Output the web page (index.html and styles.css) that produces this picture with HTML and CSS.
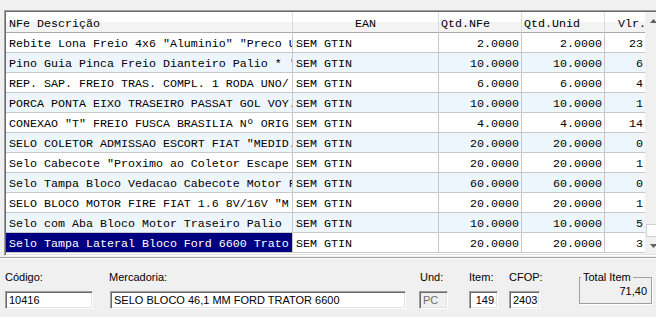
FILE: index.html
```html
<html lang="pt-BR">
<head>
    <meta charset="UTF-8">
    <meta name="viewport" content="width=device-width, initial-scale=1.0">
    <title>Itens da NFe</title>
    <link rel="stylesheet" href="styles.css">
</head>
<body>
    <div class="grid">
        <div class="cells">
            <div class="row head">
                <div class="cell c-desc">NFe Descrição</div>
                <div class="cell c-ean">EAN</div>
                <div class="cell c-qtd">Qtd.NFe</div>
                <div class="cell c-qtd">Qtd.Unid</div>
                <div class="cell c-vlr">Vlr.</div>
            </div>
            <div class="row">
                <div class="cell c-desc">Rebite Lona Freio 4x6 "Aluminio" "Preco U</div>
                <div class="cell c-ean">SEM GTIN</div>
                <div class="cell c-qtd">2.0000</div>
                <div class="cell c-qtd">2.0000</div>
                <div class="cell c-vlr">23</div>
            </div>
            <div class="row alt">
                <div class="cell c-desc">Pino Guia Pinca Freio Dianteiro Palio * '</div>
                <div class="cell c-ean">SEM GTIN</div>
                <div class="cell c-qtd">10.0000</div>
                <div class="cell c-qtd">10.0000</div>
                <div class="cell c-vlr">6</div>
            </div>
            <div class="row">
                <div class="cell c-desc">REP. SAP. FREIO TRAS. COMPL. 1 RODA UNO/</div>
                <div class="cell c-ean">SEM GTIN</div>
                <div class="cell c-qtd">6.0000</div>
                <div class="cell c-qtd">6.0000</div>
                <div class="cell c-vlr">4</div>
            </div>
            <div class="row alt">
                <div class="cell c-desc">PORCA PONTA EIXO TRASEIRO PASSAT GOL VOY.</div>
                <div class="cell c-ean">SEM GTIN</div>
                <div class="cell c-qtd">10.0000</div>
                <div class="cell c-qtd">10.0000</div>
                <div class="cell c-vlr">1</div>
            </div>
            <div class="row">
                <div class="cell c-desc">CONEXAO "T" FREIO FUSCA BRASILIA Nº ORIG</div>
                <div class="cell c-ean">SEM GTIN</div>
                <div class="cell c-qtd">4.0000</div>
                <div class="cell c-qtd">4.0000</div>
                <div class="cell c-vlr">14</div>
            </div>
            <div class="row alt">
                <div class="cell c-desc">SELO COLETOR ADMISSAO ESCORT FIAT "MEDID.</div>
                <div class="cell c-ean">SEM GTIN</div>
                <div class="cell c-qtd">20.0000</div>
                <div class="cell c-qtd">20.0000</div>
                <div class="cell c-vlr">0</div>
            </div>
            <div class="row">
                <div class="cell c-desc">Selo Cabecote "Proximo ao Coletor Escape</div>
                <div class="cell c-ean">SEM GTIN</div>
                <div class="cell c-qtd">20.0000</div>
                <div class="cell c-qtd">20.0000</div>
                <div class="cell c-vlr">1</div>
            </div>
            <div class="row alt">
                <div class="cell c-desc">Selo Tampa Bloco Vedacao Cabecote Motor F</div>
                <div class="cell c-ean">SEM GTIN</div>
                <div class="cell c-qtd">60.0000</div>
                <div class="cell c-qtd">60.0000</div>
                <div class="cell c-vlr">0</div>
            </div>
            <div class="row">
                <div class="cell c-desc">SELO BLOCO MOTOR FIRE FIAT 1.6 8V/16V "M</div>
                <div class="cell c-ean">SEM GTIN</div>
                <div class="cell c-qtd">20.0000</div>
                <div class="cell c-qtd">20.0000</div>
                <div class="cell c-vlr">1</div>
            </div>
            <div class="row alt">
                <div class="cell c-desc">Selo com Aba Bloco Motor Traseiro Palio</div>
                <div class="cell c-ean">SEM GTIN</div>
                <div class="cell c-qtd">10.0000</div>
                <div class="cell c-qtd">10.0000</div>
                <div class="cell c-vlr">5</div>
            </div>
            <div class="row">
                <div class="cell c-desc selected">Selo Tampa Lateral Bloco Ford 6600 Trato</div>
                <div class="cell c-ean">SEM GTIN</div>
                <div class="cell c-qtd">20.0000</div>
                <div class="cell c-qtd">20.0000</div>
                <div class="cell c-vlr">3</div>
            </div>
        </div>
        <div class="vscroll">
            <div class="sbtn">
                <svg width="7" height="4" viewBox="0 0 7 4"><path d="M0 4 L3.5 0 L7 4 Z" fill="#606060"/></svg>
            </div>
            <div class="track">
                <div class="thumb"></div>
            </div>
            <div class="sbtn">
                <svg width="7" height="4" viewBox="0 0 7 4"><path d="M0 0 L3.5 4 L7 0 Z" fill="#606060"/></svg>
            </div>
        </div>
    </div>

    <div class="form">
        <div class="field f-codigo">
            <div class="label">Código:</div>
            <div class="edit">10416</div>
        </div>
        <div class="field f-merc">
            <div class="label">Mercadoria:</div>
            <div class="edit">SELO BLOCO 46,1 MM FORD TRATOR 6600</div>
        </div>
        <div class="field f-und">
            <div class="label">Und:</div>
            <div class="edit disabled">PC</div>
        </div>
        <div class="field f-item">
            <div class="label">Item:</div>
            <div class="edit num">149</div>
        </div>
        <div class="field f-cfop">
            <div class="label">CFOP:</div>
            <div class="edit">2403</div>
        </div>
        <fieldset class="total">
            <legend>Total Item</legend>
            <div class="total-value">71,40</div>
        </fieldset>
    </div>
</body>
</html>
```

FILE: styles.css
```css
body {
    margin: 0;
    width: 656px;
    height: 317px;
    overflow: hidden;
    background-color: #f0f0f0;
    font-family: "Liberation Sans", Arial, sans-serif;
    font-size: 11px;
}

/* grid */

.grid {
    display: flex;
    width: 656px;
    margin: 10px 0 0 4px;
    border-top: 1px solid #a0a0a0;
    border-left: 1px solid #a0a0a0;
    border-bottom: 1px solid #ffffff;
    box-shadow: inset 1px 1px #696969, inset 0 -1px #e3e3e3;
    padding: 1px 0 1px 1px;
}

.cells {
    width: 639px;
    height: 242px;
    overflow: hidden;
    background-color: #ffffff;
    font-family: "Liberation Mono", "Courier New", monospace;
    font-size: 11.667px;
    color: #000;
}

.row {
    display: flex;
    height: 20px;
}

.row.alt {
    background-color: #eef6fd;
}

.cell {
    flex: none;
    box-sizing: border-box;
    height: 20px;
    padding: 3px 3px 0 3px;
    line-height: 16px;
    white-space: nowrap;
    overflow: hidden;
    border-right: 1px solid #c8c8c8;
    border-bottom: 1px solid #c8c8c8;
}

.c-desc {
    width: 287px;
    padding-right: 0;
}

.c-ean {
    width: 146px;
}

.c-qtd {
    width: 83px;
    text-align: right;
    padding-right: 2px;
}

.c-vlr {
    width: 40px;
    text-align: right;
    padding-right: 2px;
    border-right: none;
}

.cell.selected {
    background-color: #000080;
    color: #ffffff;
}

.row.head {
    height: 21px;
    background: linear-gradient(#ffffff, #ffffff 45%, #f3f3f3 50%, #f3f3f3);
}

.head .cell {
    height: 21px;
    padding-top: 4px;
    border-right-color: #dcdcdc;
    border-bottom-color: #a9a9a9;
}

.head .c-ean {
    text-align: center;
}

.head .c-qtd {
    text-align: left;
    padding-left: 2px;
}

.head .c-vlr {
    text-align: left;
    padding-left: 13px;
}

/* scrollbar */

.vscroll {
    width: 17px;
    height: 242px;
    display: flex;
    flex-direction: column;
    background-color: #f0f0f0;
}

.sbtn {
    height: 17px;
    display: flex;
    align-items: center;
    justify-content: center;
}

.track {
    flex: 1;
    display: flex;
    flex-direction: column;
    justify-content: flex-end;
}

.thumb {
    height: 13px;
    margin-left: 1px;
    box-sizing: border-box;
    border: 1px solid #d0d0d0;
    background-color: #fdfdfd;
}

/* bottom form */

.form {
    display: flex;
    align-items: flex-start;
    margin-top: 1px;
    border-top: 1px solid #a0a0a0;
    padding: 13px 0 0 5px;
    box-shadow: inset 0 1px #ffffff;
}

.field {
    display: flex;
    flex-direction: column;
    gap: 7px;
}

.label {
    height: 13px;
    line-height: 13px;
}

.edit {
    box-sizing: border-box;
    height: 18px;
    padding: 0 3px;
    line-height: 16px;
    background-color: #ffffff;
    border-top: 1px solid #a0a0a0;
    border-left: 1px solid #a0a0a0;
    border-bottom: 1px solid #ffffff;
    border-right: 1px solid #ffffff;
    box-shadow: inset 1px 1px #696969, inset -1px -1px #e3e3e3;
    white-space: nowrap;
    overflow: hidden;
}

.edit.disabled {
    background-color: #f0f0f0;
    color: #6d6d6d;
}

.edit.num {
    text-align: right;
}

.f-codigo {
    width: 88px;
}

.f-merc {
    width: 296px;
    margin-left: 17px;
}

.f-merc .label {
    margin-left: -1px;
}

.f-und {
    width: 29px;
    margin-left: 13px;
}

.f-und .label {
    margin-left: 1px;
}

.f-item {
    width: 29px;
    margin-left: 21px;
}

.f-cfop {
    width: 31px;
    margin-left: 11px;
}

.total {
    width: 73px;
    height: 33px;
    box-sizing: border-box;
    margin: 0 0 0 39px;
    padding: 0 4px;
    border: 1px solid #a0a0a0;
    box-shadow: 1px 1px #ffffff;
}

.total legend {
    padding: 0 2px;
    margin-left: -3px;
    line-height: 13px;
}

.total-value {
    text-align: right;
    padding-top: 1px;
    line-height: 13px;
}
```
